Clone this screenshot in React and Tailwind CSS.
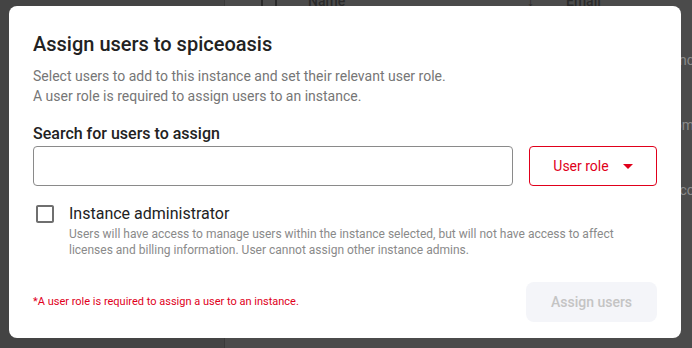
import React from 'react';

const rows = [
  { name: 'Amelia Hart', email: 'amelia.hart@spiceoasis.inc', cell: 'w-[127px]' },
  { name: 'Marcus Lee', email: 'marcus.lee@spiceoasis.com', cell: 'w-[127px]' },
  { name: 'Priya Nair', email: 'priya.nair@spiceoasis.io.com', cell: 'w-[140px]' },
];

const Backdrop = () => (
  <div className="flex h-[348px] w-[692px] overflow-hidden">
    <div className="w-[225px] shrink-0 bg-[#444444] border-r border-[#3a3a3a]" />
    <div className="flex-1 bg-[#4b4b4b] text-[14px] text-[#8a8a8a]">
      <div className="-mt-[12px] flex h-[26px] items-center text-[#2a2a2a] font-medium">
        <div className="ml-[36px] h-[16px] w-[16px] rounded-[2px] border-2 border-[#2a2a2a]" />
        <div className="ml-[31px] w-[219px]">Name</div>
        <div className="w-[39px]">↓</div>
        <div>Email</div>
      </div>
      <div className="mt-[14px]">
        {rows.map(row => (
          <div key={row.email} className="flex h-[65px] items-center whitespace-nowrap">
            <div className="ml-[83px] w-[259px] shrink-0">{row.name}</div>
            <div className={`${row.cell} shrink-0 flex justify-end`}>{row.email}</div>
          </div>
        ))}
      </div>
    </div>
  </div>
);

const CheckboxIcon = () => (
  <svg width="24" height="24" viewBox="0 0 24 24" className="shrink-0">
    <path
      fill="#6f6f6f"
      d="M19 5v14H5V5h14m0-2H5c-1.1 0-2 .9-2 2v14c0 1.1.9 2 2 2h14c1.1 0 2-.9 2-2V5c0-1.1-.9-2-2-2z"
    />
  </svg>
);

export default function App() {
  return (
    <div className="relative w-[692px] h-[348px] overflow-hidden font-['Roboto',sans-serif]">
      <Backdrop />

      {/* Modal */}
      <div className="absolute inset-0 pt-[6px]">
        <div className="ml-[9px] w-[672px] rounded-[8px] bg-white px-6 pt-6 pb-4">
          <h2 className="text-[20px] leading-7 font-medium text-[#222222]">
            Assign users to spiceoasis
          </h2>
          <p className="mt-2 text-[14px] leading-5 text-[#767676]">
            Select users to add to this instance and set their relevant user role.
            <br />
            A user role is required to assign users to an instance.
          </p>

          <div className="mt-[18px] text-[16px] leading-5 font-medium text-[#222222]">
            Search for users to assign
          </div>
          <div className="mt-0.5 flex gap-4">
            <input
              type="text"
              className="h-[40px] flex-1 rounded-[4px] border border-[#8a8a8a] px-3 text-[14px] outline-none"
            />
            <button className="flex h-[40px] w-[128px] items-center justify-center rounded-[4px] border border-[#e0001b] text-[14px] text-[#e0001b]">
              User role
              <svg width="10" height="5" viewBox="7 10 10 5" className="ml-[14px]">
                <path d="M7 10l5 5 5-5z" fill="#e0001b" />
              </svg>
            </button>
          </div>

          <div className="mt-4 flex gap-3">
            <CheckboxIcon />
            <div>
              <div className="text-[16px] leading-6 text-[#222222]">Instance administrator</div>
              <p className="text-[12px] leading-4 text-[#8a8a8a]">
                Users will have access to manage users within the instance selected, but will not have access to affect
                <br />
                licenses and billing information. User cannot assign other instance admins.
              </p>
            </div>
          </div>

          <div className="mt-6 flex items-center justify-between">
            <span className="text-[11px] leading-4 text-[#e0001b]">
              *A user role is required to assign a user to an instance.
            </span>
            <button
              disabled
              className="h-[40px] w-[131px] rounded-[8px] bg-[#f4f5f9] text-[14px] font-medium text-[#c4c4c4]"
            >
              Assign users
            </button>
          </div>
        </div>
      </div>
    </div>
  );
}
